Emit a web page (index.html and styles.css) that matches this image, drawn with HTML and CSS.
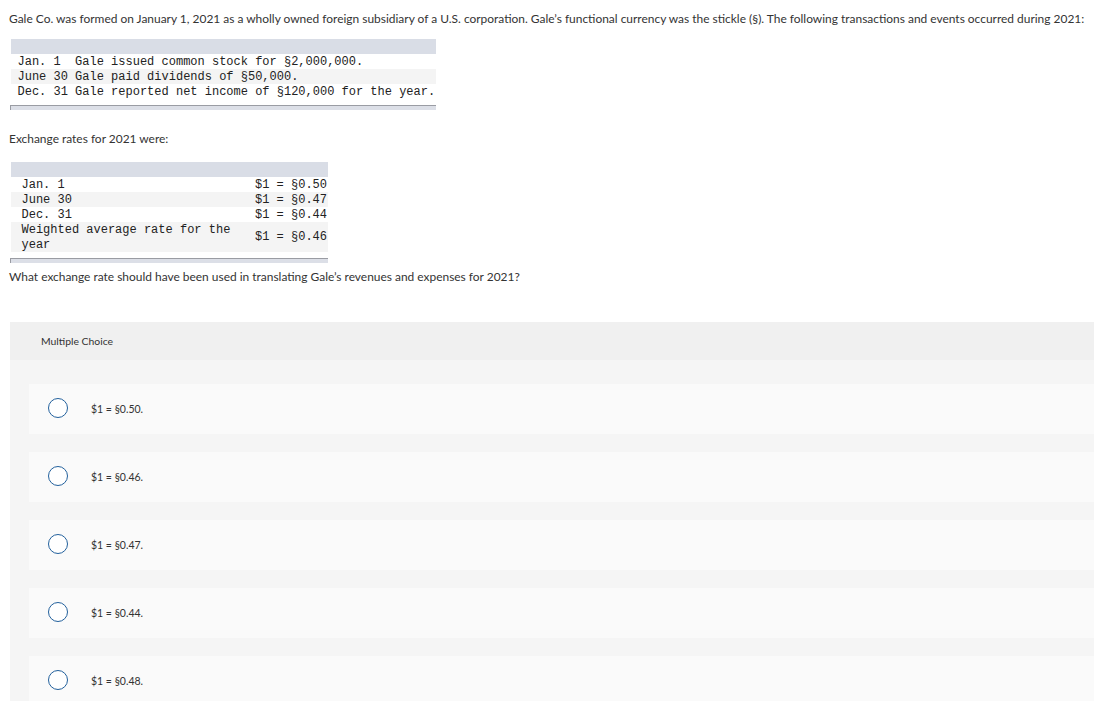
FILE: index.html
```html
<!DOCTYPE html>
<html>
<head>
<meta charset="utf-8">
<link rel="stylesheet" href="styles.css">
</head>
<body>
<div class="page">
  <p class="prose intro">Gale Co. was formed on January 1, 2021 as a wholly owned foreign subsidiary of a U.S. corporation. Gale’s functional currency was the stickle (§). The following transactions and events occurred during 2021:</p>

  <table class="mono-table events">
    <thead><tr><th></th></tr></thead>
    <tbody>
      <tr><td>Jan. 1&nbsp;&nbsp;Gale issued common stock for §2,000,000.</td></tr>
      <tr class="alt"><td>June 30 Gale paid dividends of §50,000.</td></tr>
      <tr><td>Dec. 31 Gale reported net income of §120,000 for the year.</td></tr>
      <tr class="spacer"><td></td></tr>
    </tbody>
    <tfoot><tr><td></td></tr></tfoot>
  </table>

  <p class="prose rates-label">Exchange rates for 2021 were:</p>

  <table class="mono-table rates">
    <thead><tr><th></th><th></th></tr></thead>
    <tbody>
      <tr><td class="label">Jan. 1</td><td class="val">$1 = §0.50</td></tr>
      <tr class="alt"><td class="label">June 30</td><td class="val">$1 = §0.47</td></tr>
      <tr><td class="label">Dec. 31</td><td class="val">$1 = §0.44</td></tr>
      <tr class="alt tall"><td class="label">Weighted average rate for the year</td><td class="val">$1 = §0.46</td></tr>
      <tr class="spacer"><td></td><td></td></tr>
    </tbody>
    <tfoot><tr><td></td><td></td></tr></tfoot>
  </table>

  <p class="prose question">What exchange rate should have been used in translating Gale’s revenues and expenses for 2021?</p>

  <section class="mc">
    <div class="mc-head">Multiple Choice</div>
    <div class="mc-body">
      <label class="option"><span class="radio"></span><span class="opt-text">$1 = §0.50.</span></label>
      <label class="option"><span class="radio"></span><span class="opt-text">$1 = §0.46.</span></label>
      <label class="option"><span class="radio"></span><span class="opt-text">$1 = §0.47.</span></label>
      <label class="option"><span class="radio"></span><span class="opt-text">$1 = §0.44.</span></label>
      <label class="option"><span class="radio"></span><span class="opt-text">$1 = §0.48.</span></label>
    </div>
  </section>
</div>
</body>
</html>
```

FILE: styles.css
```css
html, body {
  margin: 0;
  padding: 0;
  background: #ffffff;
  overflow: hidden;
}

.page {
  padding: 11px 0 0 10px;
  color: #333333;
}

.prose {
  font-family: "Lato", "Open Sans", sans-serif;
  font-size: 11.95px;
  line-height: 16px;
  margin: 0;
  margin-left: -1px;
  color: #333333;
}

.mono-table {
  border-collapse: collapse;
  font-family: "Liberation Mono", "DejaVu Sans Mono", monospace;
  font-size: 12px;
  line-height: 14px;
  color: #222222;
}

.mono-table th,
.mono-table td {
  padding: 0;
}

.mono-table tbody td {
  padding-top: 1px;
  padding-bottom: 0;
}

.mono-table tbody tr.tall td {
  line-height: 14.5px;
}

.mono-table thead th {
  background: #d9dde6;
  height: 15px;
}

.mono-table tbody tr.alt td {
  background: #f4f4f4;
}

.mono-table tbody tr.spacer td {
  height: 6px;
  padding: 0;
}

.mono-table tfoot td {
  height: 4px;
  background: #dcdfe7;
  border-top: 1px solid #9a9ca3;
}

.mono-table tfoot td:first-child {
  border-left: 1px solid #9a9ca3;
}

.events {
  margin-top: 12px;
  width: 426px;
}

.events td {
  padding-left: 7px;
  white-space: pre;
}

.rates-label {
  margin-top: 21px;
}

.rates {
  margin-top: 15px;
  width: 318px;
}

.rates td.label {
  width: 222px;
  padding-left: 11px;
}

.rates td.val {
  text-align: right;
  padding-right: 1px;
  white-space: pre;
}

.question {
  margin-top: 6px;
}

.mc {
  margin-top: 37px;
  background: #f5f5f5;
  font-family: "Lato", "Open Sans", sans-serif;
}

.mc-head {
  background: #f0f0f0;
  height: 38px;
  display: flex;
  align-items: center;
  padding-left: 31px;
  font-size: 10.4px;
  color: #333333;
}

.mc-body {
  padding: 24px 0 0 19px;
  display: flex;
  flex-direction: column;
  gap: 18px;
}

.option {
  background: #fafafa;
  height: 50px;
  display: flex;
  align-items: center;
  padding-left: 19px;
}

.radio {
  width: 18px;
  height: 18px;
  border: 1.5px solid #22609c;
  border-radius: 50%;
  background: #ffffff;
  flex: none;
  margin-top: -2px;
}

.opt-text {
  margin-left: 23px;
  font-size: 10.5px;
  color: #333333;
}
```
